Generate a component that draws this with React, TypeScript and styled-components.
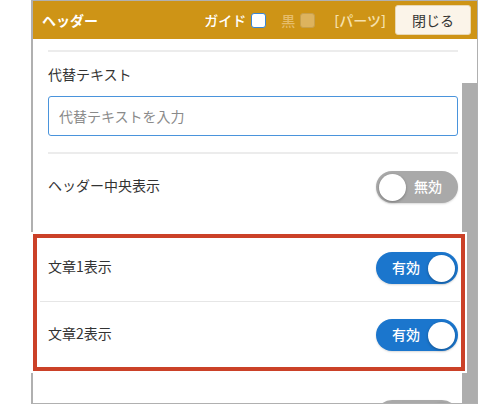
import styled, { createGlobalStyle } from 'styled-components';

const GlobalStyle = createGlobalStyle`
  html, body {
    margin: 0;
    padding: 0;
    background: #ffffff;
  }
  body {
    font-family: "Noto Sans CJK JP", "Noto Sans", sans-serif;
    color: #333333;
  }
`;

const Page = styled.div`
  position: relative;
  width: 480px;
  height: 404px;
  overflow: hidden;
  background: #ffffff;
`;

const Panel = styled.div`
  box-sizing: border-box;
  margin-left: 31px;
  width: 447px;
  height: 404px;
  border: 1px solid #b0b0b0;
  border-left-width: 2px;
  display: flex;
  flex-direction: column;
  overflow: hidden;
`;

const Header = styled.div`
  box-sizing: border-box;
  height: 38px;
  flex-shrink: 0;
  background: #ce9416;
  display: flex;
  align-items: center;
  padding: 0 6px 0 9px;
`;

const Title = styled.div`
  color: #ffffff;
  font-size: 14px;
  font-weight: 700;
  flex: 1;
`;

const HeaderLabel = styled.span<{ $tone?: 'white' | 'faded' | 'light' }>`
  font-size: 14px;
  font-weight: 500;
  margin-left: ${({ $tone }) => ($tone === 'light' ? '4px' : '0')};
  color: ${({ $tone }) =>
    $tone === 'faded' ? '#e6bd6b' : $tone === 'light' ? '#f6e1ad' : '#ffffff'};
`;

const Check = styled.span<{ $faded?: boolean }>`
  box-sizing: border-box;
  display: inline-block;
  width: 15px;
  height: 15px;
  border-radius: 3px;
  margin: 0 15px 0 5px;
  background: ${({ $faded }) => ($faded ? '#ddb35e' : '#ffffff')};
  border: 1.5px solid ${({ $faded }) => ($faded ? '#c7a04c' : '#3a86d6')};
`;

const CloseButton = styled.button`
  box-sizing: border-box;
  width: 76px;
  height: 30px;
  margin-left: 9px;
  background: #fbf4e9;
  border: 1px solid #e9d8b4;
  border-radius: 3px;
  font-family: inherit;
  font-size: 14px;
  color: #333333;
  padding: 0;
`;

const Body = styled.div`
  flex: 1;
  display: flex;
  min-height: 0;
`;

const Content = styled.div`
  flex: 1;
  padding: 0 4px 0 15px;
`;

const ScrollTrack = styled.div`
  width: 15px;
  flex-shrink: 0;
  padding-top: 44px;
  display: flex;
`;

const ScrollThumb = styled.div`
  flex: 1;
  background: #adadad;
`;

const TopRule = styled.div`
  height: 11px;
  border-bottom: 2px solid #ececec;
`;

const Field = styled.div`
  display: flex;
  flex-direction: column;
  gap: 10px;
  padding: 14px 0 16px;
  border-bottom: 2px solid #ececec;
`;

const Label = styled.div`
  font-size: 14px;
  line-height: 20px;
  color: #333333;
  margin: -2px 0 2px;
`;

const TextInput = styled.input`
  box-sizing: border-box;
  height: 40px;
  width: 100%;
  border: 1px solid #4a94dc;
  border-radius: 3px;
  padding: 0 10px;
  font-family: inherit;
  font-size: 14px;
  color: #333333;
  outline: none;
  &::placeholder {
    color: #8a8a8a;
  }
`;

const Group = styled.div`
  margin-bottom: 15px;
`;

const Row = styled.div`
  height: 66px;
  display: flex;
  align-items: center;
  justify-content: space-between;
`;

const GroupRule = styled.div`
  height: 1px;
  background: #e6e6e6;
  margin: 0 -2px 0 -8px;
`;

const Toggle = styled.div<{ $on: boolean }>`
  box-sizing: border-box;
  width: 82px;
  height: 32px;
  border-radius: 16px;
  background: ${({ $on }) => ($on ? '#1b76cd' : '#a9a9a9')};
  display: flex;
  flex-direction: ${({ $on }) => ($on ? 'row' : 'row-reverse')};
  align-items: center;
  justify-content: space-between;
  padding: 0 3px;
  box-shadow: 0 1px 2px rgba(0, 0, 0, 0.15);
`;

const ToggleText = styled.span<{ $on: boolean }>`
  color: #ffffff;
  font-size: 14px;
  font-weight: 500;
  margin-top: -2px;
  ${({ $on }) => ($on ? 'margin-left: 13px;' : 'margin-right: 13px;')}
`;

const Knob = styled.span`
  width: 27px;
  height: 27px;
  border-radius: 50%;
  background: #ffffff;
  box-shadow: 0 1px 3px rgba(0, 0, 0, 0.3);
`;

const Highlight = styled.div`
  position: absolute;
  left: 31px;
  top: 232px;
  width: 436px;
  height: 141px;
  box-sizing: border-box;
  border: 2px solid #ffffff;
  pointer-events: none;
  &::after {
    content: '';
    position: absolute;
    inset: 0;
    border: 4px solid #cb4128;
  }
`;

function Switch({ on, bare }: { on: boolean; bare?: boolean }) {
  return (
    <Toggle $on={on}>
      {!bare && <ToggleText $on={on}>{on ? '有効' : '無効'}</ToggleText>}
      <Knob />
    </Toggle>
  );
}

export default function App() {
  return (
    <Page>
      <GlobalStyle />
      <Panel>
        <Header>
          <Title>ヘッダー</Title>
          <HeaderLabel>ガイド</HeaderLabel>
          <Check />
          <HeaderLabel $tone="faded">黒</HeaderLabel>
          <Check $faded />
          <HeaderLabel $tone="light">[パーツ]</HeaderLabel>
          <CloseButton>閉じる</CloseButton>
        </Header>
        <Body>
          <Content>
            <TopRule />
            <Field>
              <Label>代替テキスト</Label>
              <TextInput placeholder="代替テキストを入力" />
            </Field>
            <Group>
              <Row>
                <Label>ヘッダー中央表示</Label>
                <Switch on={false} />
              </Row>
            </Group>
            <Group>
              <Row>
                <Label>文章1表示</Label>
                <Switch on />
              </Row>
              <GroupRule />
              <Row>
                <Label>文章2表示</Label>
                <Switch on />
              </Row>
            </Group>
            <Group>
              <Row>
                <span />
                <Switch on={false} bare />
              </Row>
            </Group>
          </Content>
          <ScrollTrack>
            <ScrollThumb />
          </ScrollTrack>
        </Body>
      </Panel>
      <Highlight />
    </Page>
  );
}
